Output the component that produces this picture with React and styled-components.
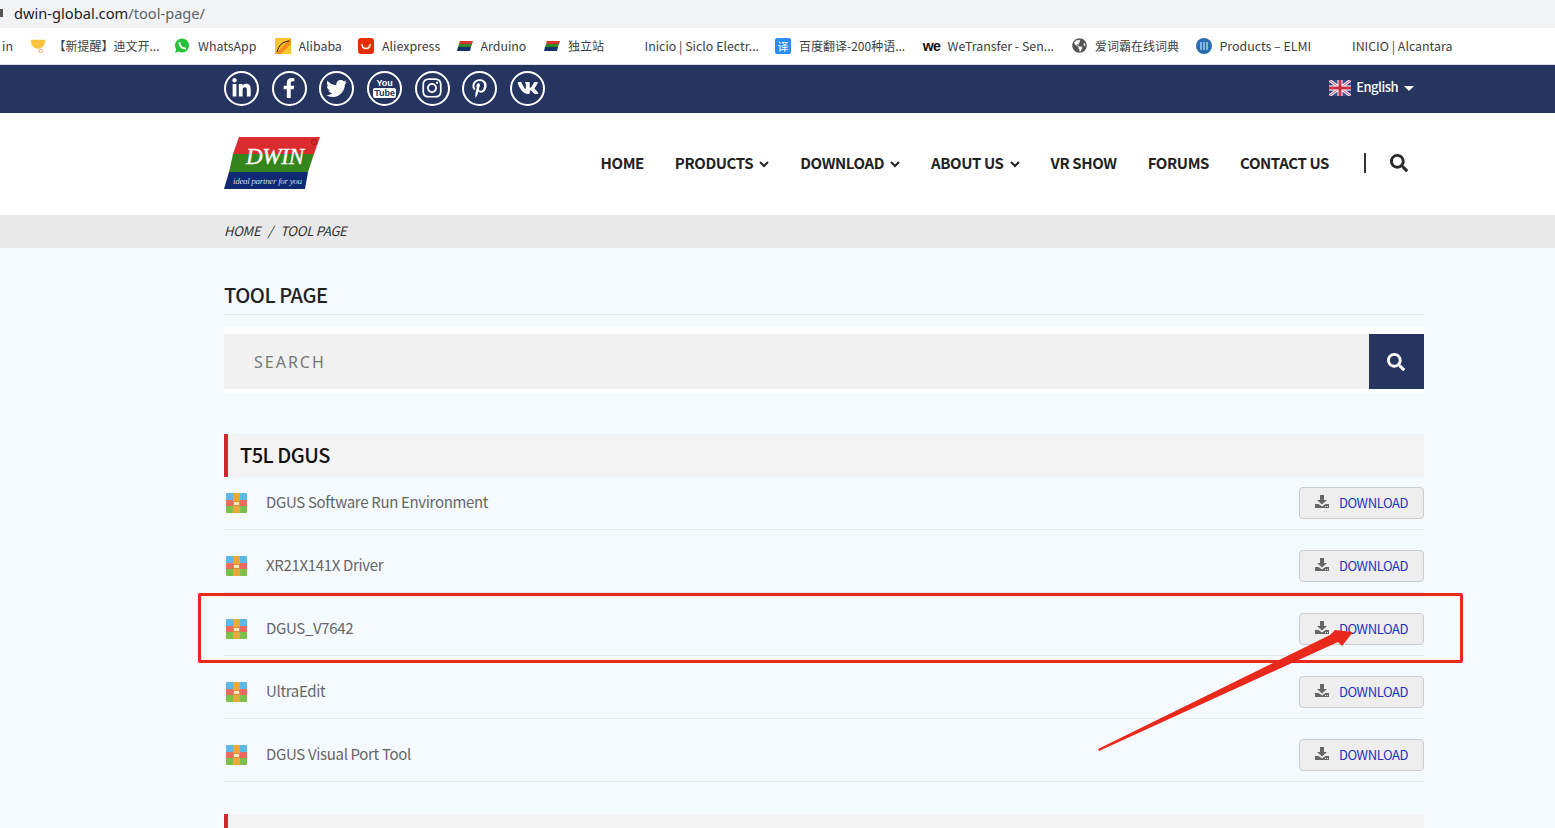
import styled, { createGlobalStyle } from 'styled-components'
import { FaLinkedinIn, FaFacebookF, FaTwitter, FaInstagram, FaPinterestP, FaVk, FaSearch, FaGlobeAmericas } from 'react-icons/fa'

const cjk = '"Noto Sans CJK SC", "Noto Sans", sans-serif'

const GlobalStyle = createGlobalStyle`
  html, body { margin: 0; padding: 0; background: #f5faff; }
  body { font-family: ${cjk}; }
`

const Translate = styled.div`
  width: 16px;
  height: 16px;
  line-height: 16px;
  text-align: center;
  font-size: 11px;
  color: #fff;
  background: #2b8df0;
  border-radius: 2px;
`

const We = styled.div`
  font-family: "Liberation Sans", sans-serif;
  font-weight: 700;
  font-size: 14px;
  line-height: 12px;
  letter-spacing: -0.5px;
  color: #111;
`

const DownloadIcon = () => (
  <svg width="14" height="13" viewBox="0 0 14 13">
    <path d="M5 0h4v5h3L7 9.5 2 5h3z" fill="#666" />
    <path d="M0 9h3.5L7 11.5 10.500 9H14v4H0z" fill="#666" />
    <path d="M10 11h1v1h-1zM12 11h1v1h-1z" fill="#eee" />
  </svg>
)

const ArchiveIcon = () => (
  <svg width="21" height="20" viewBox="0 0 21 20">
    <rect width="21" height="8" rx="1" fill="#5cb8e6" />
    <rect width="21" height="7" y="7" fill="#ee6a5f" />
    <rect width="21" height="7" y="13" rx="1" fill="#7cc04b" />
    <rect x="7" width="7" height="20" fill="#e8a93c" />
    <rect x="7.500" y="8.500" width="6" height="4" fill="#f6e7c4" stroke="#d9903a" />
  </svg>
)

const Flag = () => (
  <svg width="22" height="16" viewBox="0 0 22 16">
    <rect width="22" height="16" fill="#3a4a8a" />
    <path d="M0 0l22 16M22 0L0 16" stroke="#fff" strokeWidth="3" />
    <path d="M0 0l22 16M22 0L0 16" stroke="#c8304a" strokeWidth="1" />
    <path d="M11 0v16M0 8h22" stroke="#fff" strokeWidth="5" />
    <path d="M11 0v16M0 8h22" stroke="#c8304a" strokeWidth="3" />
  </svg>
)

const Logo = () => (
  <svg width="96" height="52" viewBox="0 0 96 52">
    <polygon points="15,0 96,0 90,17 9,17" fill="#dc2b2f" />
    <polygon points="9,17 90,17 84,35 5,35" fill="#34861c" />
    <polygon points="5,35 84,35 81,52 0,52" fill="#0f2a72" />
    <text x="22" y="27" fontFamily="Liberation Serif" fontStyle="italic" fontSize="23" fill="#fff" stroke="#fff" strokeWidth="0.35" textLength="58">DWIN</text>
    <text x="9" y="47" fontFamily="Liberation Serif" fontStyle="italic" fontSize="9" fill="#cfd6ee" textLength="69">ideal partner for you</text>
    <circle cx="90" cy="5" r="2.500" fill="none" stroke="#8a1518" strokeWidth="0.8" />
  </svg>
)

const BarBadge = ({ color }) => (
  <svg width="16" height="10" viewBox="0 0 16 10">
    <polygon points="3,0 16,0 15,3 2,3" fill={color || '#d8342c'} />
    <polygon points="2,3 15,3 14,6 1,6" fill="#2f8a28" />
    <polygon points="1,6 14,6 13,10 0,10" fill="#16306e" />
  </svg>
)

const WhatsIcon = () => (
  <svg width="16" height="16" viewBox="0 0 16 16">
    <circle cx="8" cy="7.500" r="7" fill="#25c23a" />
    <path d="M1 15l1.500-5 3 3z" fill="#25c23a" />
    <path d="M5.500 5c0 3 2.500 5.500 5.500 5.500" fill="none" stroke="#fff" strokeWidth="2" strokeLinecap="round" />
  </svg>
)

const bookmarks = [
  { label: '【新提醒】迪文开...', w: 104, cjk: true, icon: <svg width="18" height="16" viewBox="0 0 18 16"><path d="M1 1h16c0 6-3 10-8 10S1 7 1 1z" fill="#f9c23c" /><circle cx="12" cy="13.500" r="2" fill="none" stroke="#f0a060" /></svg> },
  { label: 'WhatsApp', w: 60, icon: <WhatsIcon /> },
  { label: 'Alibaba', w: 43, icon: <svg width="16" height="16" viewBox="0 0 16 16"><rect width="16" height="16" fill="#fbc531" /><path d="M0 16L16 0v6L6 16z" fill="#f58a1f" /><path d="M2 14C4 7 7 4 14 3" fill="none" stroke="#111" /></svg> },
  { label: 'Aliexpress', w: 58, icon: <svg width="16" height="16" viewBox="0 0 16 16"><rect width="16" height="16" rx="3" fill="#e62e04" /><path d="M4 6c0 6 8 6 8 0" fill="none" stroke="#fff" strokeWidth="1.500" /></svg> },
  { label: 'Arduino', w: 47, icon: <BarBadge /> },
  { label: '独立站', w: 36, cjk: true, icon: <BarBadge /> },
  { label: 'Inicio | Siclo Electr...', w: 114 },
  { label: '百度翻译-200种语...', w: 108, cjk: true, icon: <Translate>译</Translate> },
  { label: 'WeTransfer - Sen...', w: 107, icon: <We>we</We> },
  { label: '爱词霸在线词典', w: 84, cjk: true, icon: <FaGlobeAmericas size={15} color="#555" /> },
  { label: 'Products – ELMI', w: 92, icon: <svg width="16" height="16" viewBox="0 0 16 16"><circle cx="8" cy="8" r="8" fill="#2a6cb0" /><path d="M5 4v8M8 4v8M11 4v8" stroke="#dff" /></svg> },
  { label: 'INICIO | Alcantara', w: 103 },
]

const navItems = [
  { label: 'HOME' },
  { label: 'PRODUCTS', caret: true },
  { label: 'DOWNLOAD', caret: true },
  { label: 'ABOUT US', caret: true },
  { label: 'VR SHOW' },
  { label: 'FORUMS' },
  { label: 'CONTACT US' },
]

const tools = ['DGUS Software Run Environment', 'XR21X141X Driver', 'DGUS_V7642', 'UltraEdit', 'DGUS Visual Port Tool']

export default function App() {
  return (
    <Page>
      <GlobalStyle />
      <UrlBar>
        <Lock />
        <Url>dwin-global.com<span>/tool-page/</span></Url>
      </UrlBar>
      <Bookmarks>
        <BookmarkText $w={11}>in</BookmarkText>
        {bookmarks.map((b) => (
          <Bookmark key={b.label}>
            <BookmarkIcon>{b.icon}</BookmarkIcon>
            <BookmarkText $w={b.w} $cjk={b.cjk}>{b.label}</BookmarkText>
          </Bookmark>
        ))}
      </Bookmarks>

      <TopBar>
        <TopWrap>
          <Socials>
            <Social><FaLinkedinIn size={21} /></Social>
            <Social><FaFacebookF size={20} /></Social>
            <Social><FaTwitter size={21} /></Social>
            <Social><YouTube><b>You</b><i>Tube</i></YouTube></Social>
            <Social><FaInstagram size={22} /></Social>
            <Social><FaPinterestP size={19} /></Social>
            <Social><FaVk size={22} /></Social>
          </Socials>
          <Lang>
            <Flag />
            <span>English</span>
            <LangCaret />
          </Lang>
        </TopWrap>
      </TopBar>

      <Header>
        <HeaderWrap>
          <Logo />
          <Nav>
            {navItems.map((n) => (
              <NavItem key={n.label}>
                {n.label}
                {n.caret && (
                  <svg width="10" height="7" viewBox="0 0 10 7"><path d="M1 1l4 4 4-4" fill="none" stroke="#222" strokeWidth="2" /></svg>
                )}
              </NavItem>
            ))}
            <NavSearch><FaSearch size={18} color="#2b2b2b" /></NavSearch>
          </Nav>
        </HeaderWrap>
      </Header>

      <Crumbs>
        <CrumbWrap>
          <span>HOME</span><Sep>/</Sep><span>TOOL PAGE</span>
        </CrumbWrap>
      </Crumbs>

      <Main>
        <Title>TOOL PAGE</Title>
        <SearchBand>
          <SearchBox>
            <SearchInput placeholder="SEARCH" />
            <SearchButton><FaSearch size={18} color="#fff" /></SearchButton>
          </SearchBox>
        </SearchBand>

        <SectionHead>T5L DGUS</SectionHead>
        <Rows>
          {tools.map((t) => (
            <Row key={t}>
              <RowName>
                <ArchiveIcon />
                <span>{t}</span>
              </RowName>
              <DownloadButton>
                <DownloadIcon />
                <span>DOWNLOAD</span>
              </DownloadButton>
            </Row>
          ))}
        </Rows>
        <NextSection />
      </Main>

      <Highlight />
      <Arrow viewBox="0 0 1555 828">
        <polygon points="1098,749 1330,635 1335,630 1353,632 1342,646 1338,642 1099,751" fill="#e8291c" />
      </Arrow>
    </Page>
  )
}

const Page = styled.div`
  position: relative;
  height: 828px;
  overflow: hidden;
  background: #f5faff;
`

const UrlBar = styled.div`
  display: flex;
  align-items: center;
  height: 28px;
  padding-bottom: 3px;
  box-sizing: border-box;
  background: #f1f3f4;
`

const Lock = styled.div`
  width: 3px;
  height: 8px;
  background: #555;
  margin-right: 11px;
`

const Url = styled.div`
  font-family: "Noto Sans", sans-serif;
  font-size: 14.65px;
  color: #202124;
  span { color: #5f6368; }
`

const Bookmarks = styled.div`
  display: flex;
  align-items: center;
  height: 37px;
  padding-bottom: 1px;
  box-sizing: border-box;
  gap: 16.5px;
  padding-left: 2px;
  background: #fff;
  border-bottom: 1px solid #d8dde6;
`

const Bookmark = styled.div`
  display: flex;
  align-items: center;
  gap: 8px;
`

const BookmarkIcon = styled.div`
  display: flex;
  align-items: center;
  justify-content: center;
  width: 16px;
  height: 16px;
`

const BookmarkText = styled.div`
  width: ${(p) => p.$w}px;
  font-size: ${(p) => (p.$cjk ? 12 : 12.4)}px;
  color: #3c4043;
  white-space: nowrap;
`

const TopBar = styled.div`
  height: 48px;
  background: #25355f;
`

const Wrap = styled.div`
  display: flex;
  align-items: center;
  justify-content: space-between;
  box-sizing: border-box;
  width: 1200px;
  height: 100%;
  margin-left: 224px;
`

const TopWrap = styled(Wrap)`
  padding-bottom: 2px;
`

const Socials = styled.div`
  display: flex;
  gap: 12.7px;
`

const Social = styled.div`
  display: flex;
  align-items: center;
  justify-content: center;
  box-sizing: border-box;
  width: 35px;
  height: 35px;
  border: 2px solid #fff;
  border-radius: 50%;
  color: #fff;
`

const YouTube = styled.div`
  display: flex;
  flex-direction: column;
  align-items: center;
  font-family: "Liberation Sans", sans-serif;
  font-size: 9px;
  line-height: 10px;
  b { font-weight: 700; }
  i {
    font-style: normal;
    font-weight: 700;
    color: #25355f;
    background: #fff;
    border-radius: 2px;
    padding: 0 1px;
  }
`

const Lang = styled.div`
  display: flex;
  align-items: center;
  margin-right: 10px;
  font-size: 13px;
  font-weight: 500;
  letter-spacing: -0.5px;
  color: #fff;
  svg { margin-right: 5px; }
  span { margin-bottom: 4px; }
`

const LangCaret = styled.div`
  margin-left: 6px;
  border-left: 5px solid transparent;
  border-right: 5px solid transparent;
  border-top: 5px solid #fff;
`

const Header = styled.div`
  height: 102px;
  background: #fff;
`

const HeaderWrap = styled(Wrap)`
  padding-bottom: 3px;
`

const Nav = styled.div`
  display: flex;
  align-items: center;
  gap: 31px;
  margin-right: 16px;
`

const NavItem = styled.div`
  display: flex;
  align-items: center;
  gap: 6px;
  font-size: 15px;
  font-weight: 700;
  letter-spacing: -0.4px;
  color: #222;
  white-space: nowrap;
  svg { margin-top: 3px; }
`

const NavSearch = styled.div`
  display: flex;
  align-items: center;
  height: 20px;
  padding-left: 24px;
  margin-left: 4px;
  border-left: 2px solid #333;
`

const Crumbs = styled.div`
  height: 33px;
  padding-bottom: 3px;
  box-sizing: border-box;
  background: #e9e9e9;
`

const CrumbWrap = styled.div`
  display: flex;
  align-items: center;
  height: 100%;
  margin-left: 224px;
  font-size: 13px;
  font-style: italic;
  letter-spacing: -0.25px;
  color: #333;
`

const Sep = styled.span`
  margin: 0 7.5px;
`

const Main = styled.div`
  width: 1200px;
  margin-left: 224px;
`

const Title = styled.div`
  box-sizing: border-box;
  height: 67px;
  padding-top: 32px;
  border-bottom: 1px solid #e3e6ea;
  font-size: 20px;
  line-height: 30px;
  font-weight: 500;
  letter-spacing: -0.45px;
  color: #222;
`

const SearchBand = styled.div`
  margin-top: 12px;
  padding: 7px 0 4px;
  background: #fff;
`

const SearchBox = styled.div`
  display: flex;
  height: 55px;
  background: #f1f1f1;
`

const SearchInput = styled.input`
  flex: 1;
  border: none;
  outline: none;
  padding: 0 30px;
  background: transparent;
  font-family: "Noto Sans", sans-serif;
  font-size: 16px;
  letter-spacing: 2px;
  &::placeholder { color: #777; }
`

const SearchButton = styled.div`
  display: flex;
  align-items: center;
  justify-content: center;
  box-sizing: border-box;
  width: 55px;
  padding-right: 2px;
  background: #25355f;
`

const SectionHead = styled.div`
  box-sizing: border-box;
  height: 43px;
  margin-top: 41px;
  padding-left: 12px;
  border-left: 4px solid #d0282e;
  background: #f3f3f3;
  font-size: 20px;
  line-height: 41px;
  font-weight: 500;
  letter-spacing: -0.5px;
  color: #111;
`

const Rows = styled.div`
  display: flex;
  flex-direction: column;
  gap: 10px;
`

const Row = styled.div`
  display: flex;
  justify-content: space-between;
  box-sizing: border-box;
  height: 53px;
  padding-top: 10px;
  border-bottom: 1px solid #e3e8ee;
`

const RowName = styled.div`
  display: flex;
  align-items: center;
  gap: 19px;
  height: 32px;
  padding-left: 2px;
  font-size: 15px;
  letter-spacing: -0.33px;
  color: #666;
  span { margin-bottom: 4px; }
`

const DownloadButton = styled.div`
  display: flex;
  align-items: center;
  justify-content: center;
  gap: 10px;
  box-sizing: border-box;
  width: 125px;
  height: 32px;
  background: #eee;
  border: 1px solid #ccc;
  border-radius: 4px;
  font-size: 13px;
  letter-spacing: -0.4px;
  color: #1a35c0;
  span { margin-bottom: 1px; }
  svg { margin-bottom: 3px; }
`

const NextSection = styled.div`
  height: 43px;
  margin-top: 32px;
  border-left: 4px solid #d0282e;
  background: #f3f3f3;
`

const Highlight = styled.div`
  position: absolute;
  left: 198px;
  top: 593px;
  width: 1259px;
  height: 64px;
  border: 3px solid #e8291c;
  border-radius: 2px;
`

const Arrow = styled.svg`
  position: absolute;
  left: 0;
  top: 0;
  width: 1555px;
  height: 828px;
  pointer-events: none;
`
